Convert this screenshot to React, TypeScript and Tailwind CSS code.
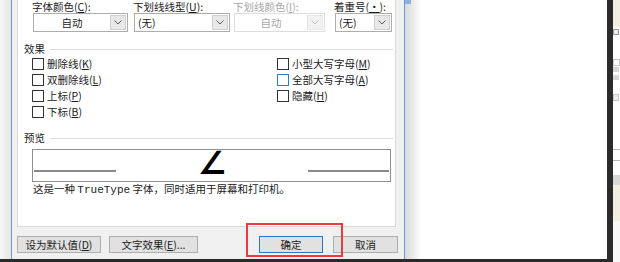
import React from 'react'

function Chevron({ color }: { color: string }) {
  return (
    <svg width="8" height="5" viewBox="0 0 8 5">
      <path d="M0.5 0.5 L4 4 L7.5 0.5" fill="none" stroke={color} strokeWidth="1" />
    </svg>
  )
}

function Key({ k }: { k: string }) {
  return (
    <>
      (<span className="underline underline-offset-1">{k}</span>)
    </>
  )
}

function Select({
  value,
  center,
  disabled,
  width,
}: {
  value: string
  center?: boolean
  disabled?: boolean
  width: string
}) {
  return (
    <div
      className={`flex h-[19px] border bg-white ${width} ${
        disabled ? 'border-[#dedede] text-[#a8a8a8]' : 'border-[#adadad] text-[#1b1b1b]'
      }`}
    >
      <div className={`flex flex-1 items-center ${center ? 'justify-center' : 'pl-[3px]'}`}>{value}</div>
      <div
        className={`my-[1px] mr-[1px] flex w-[16px] items-center justify-center border ${
          disabled ? 'border-[#e6e6e6] bg-[#f2f2f2]' : 'border-[#cfcfcf] bg-[#e8e8e8]'
        }`}
      >
        <Chevron color={disabled ? '#c0c0c0' : '#5f5f5f'} />
      </div>
    </div>
  )
}

function Check({ label, k, focus }: { label: string; k: string; focus?: boolean }) {
  return (
    <div className="flex h-[16px] items-center">
      <span
        className={`h-[12px] w-[12px] border bg-white ${focus ? 'border-[#2a7fd4]' : 'border-[#333333]'}`}
      />
      <span className="ml-[3px] leading-[12px]">
        {label}
        <Key k={k} />
      </span>
    </div>
  )
}

function SectionHeader({ title }: { title: string }) {
  return (
    <div className="flex h-[12px] items-center pl-[6px] pr-[2px]">
      <span className="leading-[12px]">{title}</span>
      <div className="ml-[5px] h-px flex-1 bg-[#dcdcdc]" />
    </div>
  )
}

function Button({ children, width, primary }: { children: React.ReactNode; width: string; primary?: boolean }) {
  return (
    <div
      className={`flex h-[17px] items-center justify-center border bg-[#e1e1e1] leading-[12px] ${width} ${
        primary ? 'border-[#1f7ad6]' : 'border-[#adadad]'
      }`}
    >
      {children}
    </div>
  )
}

function FontDialog() {
  return (
    <div className="relative flex w-[394px] flex-col border-x border-[#5e9fde] bg-[#f0f0f0]">
      <div className="ml-[5px] flex h-[227px] w-[379px] flex-col border-x border-b border-[#d9d9d9] bg-white">
        <div className="ml-[14px] flex">
          <div className="flex flex-col">
            <div className="mt-px h-[12px] leading-[12px]">
              字体颜色<Key k="C" />:
            </div>
            <div className="ml-px">
              <Select value="自动" center width="w-[95px]" />
            </div>
          </div>
          <div className="ml-[5px] flex flex-col">
            <div className="mt-px h-[12px] leading-[12px]">
              下划线线型<Key k="U" />:
            </div>
            <div className="ml-px">
              <Select value="(无)" width="w-[96px]" />
            </div>
          </div>
          <div className="ml-[3px] flex flex-col">
            <div className="mt-px h-[12px] leading-[12px] text-[#a8a8a8]">
              下划线颜色<Key k="I" />:
            </div>
            <div className="ml-px">
              <Select value="自动" center disabled width="w-[91px]" />
            </div>
          </div>
          <div className="ml-[9px] flex flex-col">
            <div className="mt-px h-[12px] leading-[12px]">
              着重号(<span className="underline underline-offset-1">・</span>):
            </div>
            <div className="ml-px">
              <Select value="(无)" width="w-[57px]" />
            </div>
          </div>
        </div>

        <div className="mt-[11px]">
          <SectionHeader title="效果" />
        </div>
        <div className="ml-[14px] mt-px grid grid-cols-[245px_1fr]">
          <Check label="删除线" k="K" />
          <Check label="小型大写字母" k="M" />
          <Check label="双删除线" k="L" />
          <Check label="全部大写字母" k="A" focus />
          <Check label="上标" k="P" />
          <Check label="隐藏" k="H" />
          <Check label="下标" k="B" />
        </div>

        <div className="mt-[12px]">
          <SectionHeader title="预览" />
        </div>
        <div className="ml-[14px] mt-[5px] flex h-[33px] w-[359px] items-end justify-between overflow-hidden border border-[#8e8e8e] px-[1px] pb-[9px]">
          <div className="h-[2px] w-[82px] bg-[#8a8a8a]" />
          <span className="-mb-[4px] h-[26px] font-['DejaVu_Sans',sans-serif] text-[32px] font-bold leading-[26px] text-black">
            ∠
          </span>
          <div className="h-[2px] w-[81px] bg-[#8a8a8a]" />
        </div>
        <div className="ml-[15px] mt-px h-[12px] whitespace-nowrap leading-[12px]">
          这是一种 <span className="font-['Liberation_Mono',monospace] text-[11px]">TrueType</span> 字体，同时适用于屏幕和打印机。
        </div>
      </div>

      <div className="mt-[9px] flex pl-[5px] pr-[6px]">
        <Button width="w-[84px]">
          设为默认值<Key k="D" />
        </Button>
        <div className="ml-[8px]">
          <Button width="w-[89px]">
            文字效果<Key k="E" />...
          </Button>
        </div>
        <div className="flex-1" />
        <Button width="w-[64px]" primary>
          确定
        </Button>
        <div className="ml-[10px]">
          <Button width="w-[65px]">取消</Button>
        </div>
      </div>

      <div className="pointer-events-none absolute left-[234px] top-[223px] h-[34px] w-[97px] border-2 border-[#ee3a3a]" />
    </div>
  )
}

function RightStrip() {
  return (
    <div className="flex w-[7px] flex-col bg-white">
      <div className="h-[27px] bg-[#f2efe1]" />
      <div className="mt-[2px] h-[6px] w-[6px] border border-[#9a9a9a] bg-[#eeeeee]" />
      <div className="mt-[24px] h-[7px] border border-[#c8c8c8]" />
      <div className="mt-px h-[5px] w-[6px] bg-[#d6d6d6]" />
      <div className="mt-[3px] h-[5px] w-[6px] bg-[#d6d6d6]" />
      <div className="mt-[14px] h-[7px] w-[6px] border border-[#c8c8c8] bg-[#ececec]" />
      <div className="mt-[48px] h-[12px] border-y border-[#b8b8b8]" />
      <div className="mt-[14px] h-[10px] bg-[#d8d8d8]" />
      <div className="h-[36px] bg-[#f2efe1]" />
      <div className="flex-1 bg-[#f7f7f7]" />
    </div>
  )
}

export default function App() {
  return (
    <div className="flex h-[262px] w-[620px] overflow-hidden bg-white font-['Noto_Sans_CJK_SC',sans-serif] text-[10.5px] text-[#1b1b1b]">
      <div className="flex w-[607px] flex-col">
        <div className="flex h-[259px]">
          <div className="w-[11px] bg-gradient-to-r from-[#f7f7f7] to-[#e6e6e6]" />
          <FontDialog />
          <div className="flex-1 bg-gradient-to-r from-[#d8d8d8] via-white via-8% to-white">
            <div className="h-[4px] w-[6px] bg-[#8fb0da]" />
          </div>
        </div>
        <div className="h-[3px] bg-[#2a2a2a]" />
      </div>
      <div className="w-[6px] bg-[#2b2b2b]" />
      <RightStrip />
    </div>
  )
}
